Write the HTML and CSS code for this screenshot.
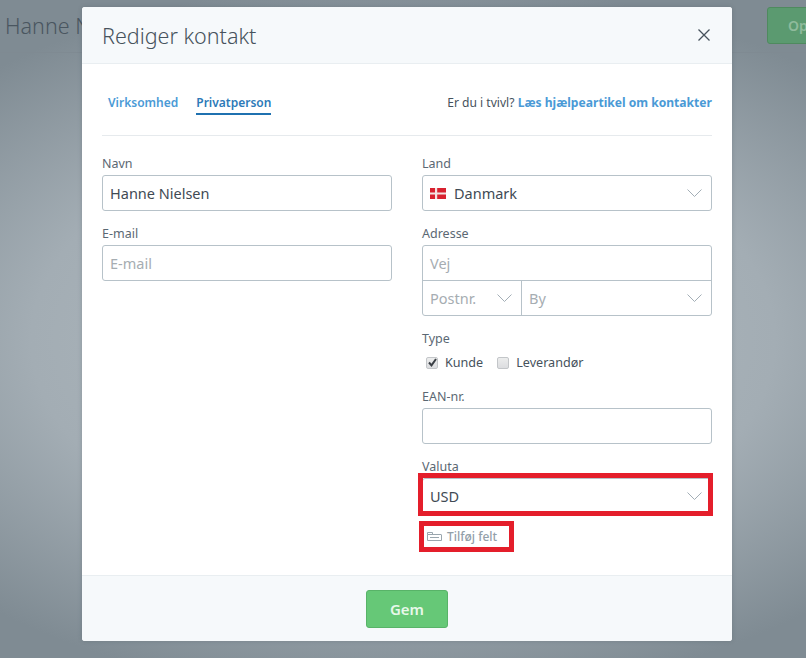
FILE: index.html
```html
<!DOCTYPE html>
<html lang="da">
<head>
<meta charset="utf-8">
<title>Rediger kontakt</title>
<link rel="stylesheet" href="styles.css">
</head>
<body>
<div class="page">
  <header class="page-head">
    <h1 class="page-title">Hanne N</h1>
    <button class="page-btn">Op</button>
  </header>
</div>
<div class="modal">
  <div class="modal-head">
    <h2 class="modal-title">Rediger kontakt</h2>
    <svg class="close" width="12" height="12" viewBox="0 0 12 12"><path d="M.5.5l11 11M11.500.5l-11 11" stroke="#46525c" stroke-width="1.300" fill="none"/></svg>
  </div>
  <div class="modal-body">
    <div class="tabs-row">
      <nav class="tabs">
        <a class="tab">Virksomhed</a>
        <a class="tab active">Privatperson</a>
      </nav>
      <p class="help">Er du i tvivl? <a class="help-link">Læs hjælpeartikel om kontakter</a></p>
    </div>
    <div class="form">
      <div class="col">
        <div class="field">
          <label class="label">Navn</label>
          <div class="input value">Hanne Nielsen</div>
        </div>
        <div class="field">
          <label class="label">E-mail</label>
          <div class="input placeholder">E-mail</div>
        </div>
      </div>
      <div class="col">
        <div class="field">
          <label class="label">Land</label>
          <div class="input value select">
            <svg class="flag" width="16" height="11" viewBox="0 0 16 11"><rect width="16" height="11" fill="#d8212f"/><path d="M5 0h2.200v11H5zM0 4.400h16v2.200H0z" fill="#f3e3e3"/></svg>
            <span class="grow">Danmark</span>
            <svg class="chev" width="15" height="8" viewBox="0 0 15 8"><path d="M.5.5l7 7 7-7" fill="none" stroke="#a3aeb6"/></svg>
          </div>
        </div>
        <div class="field">
          <label class="label">Adresse</label>
          <div class="address">
            <div class="addr-row placeholder">Vej</div>
            <div class="addr-split">
              <div class="addr-cell zip placeholder"><span class="grow">Postnr.</span><svg class="chev" width="15" height="8" viewBox="0 0 15 8"><path d="M.5.5l7 7 7-7" fill="none" stroke="#a3aeb6"/></svg></div>
              <div class="addr-cell city placeholder"><span class="grow">By</span><svg class="chev" width="15" height="8" viewBox="0 0 15 8"><path d="M.5.5l7 7 7-7" fill="none" stroke="#a3aeb6"/></svg></div>
            </div>
          </div>
        </div>
        <div class="field type-field">
          <label class="label">Type</label>
          <div class="checks">
            <span class="check"><span class="box"><svg width="9" height="9" viewBox="0 0 9 9"><path d="M1 4.500l2.500 2.800L8 1" fill="none" stroke="#3a3f45" stroke-width="2"/></svg></span>Kunde</span>
            <span class="check"><span class="box"></span>Leverandør</span>
          </div>
        </div>
        <div class="field">
          <label class="label">EAN-nr.</label>
          <div class="input"></div>
        </div>
        <div class="field">
          <label class="label">Valuta</label>
          <div class="marked">
            <div class="input value select"><span class="grow">USD</span><svg class="chev" width="15" height="8" viewBox="0 0 15 8"><path d="M.5.5l7 7 7-7" fill="none" stroke="#a3aeb6"/></svg></div>
            <span class="red-box red-select"></span>
          </div>
        </div>
        <div class="add-field">
          <svg width="15" height="9" viewBox="0 0 15 9"><path d="M.5 2.500h13.500a.5.5 0 0 1 .5.5v5.500H.5zM.5 2.500V.5h5v2M3 5.500h9" fill="none" stroke="#9aa6ae"/></svg>
          <span>Tilføj felt</span>
          <span class="red-box red-add"></span>
        </div>
      </div>
    </div>
  </div>
  <div class="modal-foot">
    <button class="save">Gem</button>
  </div>
</div>
</body>
</html>
```
FILE: styles.css
```css
* { box-sizing: border-box; }
html, body { height: 100%; }
body {
  margin: 0;
  overflow: hidden;
  font-family: "Noto Sans", sans-serif;
  background: radial-gradient(ellipse 620px 360px at 403px 340px, #b2bcc1 0%, #a3adb4 60%, #7f8b93 100%);
  color: #46525c;
}
.page-head {
  height: 53px;
  padding: 7px 0 0 5px;
  display: flex;
  justify-content: space-between;
  align-items: flex-start;
  border-bottom: 1px solid #7f8a92;
}
.page-title {
  margin: 0;
  font-size: 21.500px;
  font-weight: 300;
  line-height: 37px;
  white-space: nowrap;
  color: #4a5660;
}
.page-btn {
  width: 60px;
  height: 37px;
  margin-right: -21px;
  border: 1px solid #4f8a5f;
  border-radius: 3px;
  background: #5b9a70;
  color: #8fbb9c;
  font: 600 14px "Noto Sans", sans-serif;
  text-align: left;
  padding-left: 20px;
}
.modal {
  position: absolute;
  left: 82px;
  top: 7px;
  width: 650px;
  height: 634px;
  background: #fff;
  border-radius: 3px;
  box-shadow: 0 0 4px rgba(60, 70, 80, .25);
  display: flex;
  flex-direction: column;
  overflow: hidden;
}
.modal-head {
  height: 57px;
  flex: none;
  padding: 0 22px 0 20px;
  display: flex;
  align-items: center;
  justify-content: space-between;
  background: #f6f9fb;
  border-bottom: 1px solid #e9eef1;
}
.modal-title {
  margin: 0;
  font-size: 21.500px;
  font-weight: 300;
  color: #47535d;
}
.modal-body { flex: 1; padding: 0 20px; }
.tabs-row {
  height: 72px;
  display: flex;
  justify-content: space-between;
  align-items: flex-start;
  border-bottom: 1px solid #e6eaed;
  padding-top: 29px;
}
.tabs { display: flex; gap: 18px; padding-left: 6px; }
.tab {
  font-size: 12px;
  font-weight: 600;
  line-height: 19px;
  color: #4a9ad6;
  padding-bottom: 1px;
}
.tab.active { color: #2d7ab8; border-bottom: 2px solid #1f71b0; }
.help {
  margin: 0;
  font-size: 12.100px;
  line-height: 19px;
  color: #46525c;
}
.help-link { font-weight: 700; color: #4a9ad6; }
.form {
  display: grid;
  grid-template-columns: 290px 290px;
  column-gap: 30px;
  padding-top: 17px;
}
.field { margin-bottom: 12px; }
.label {
  display: block;
  font-size: 12.500px;
  line-height: 22px;
  color: #5b6873;
}
.input {
  height: 36px;
  border: 1px solid #b7c2c9;
  border-radius: 3px;
  padding: 0 7px;
  display: flex;
  align-items: center;
  font-size: 14.500px;
  background: #fff;
}
.value { color: #3f4a54; }
.placeholder { color: #a6adb2; }
.grow { flex: 1; }
.select { padding-right: 9px; }
.flag { margin-right: 8px; }
.address { border: 1px solid #b7c2c9; border-radius: 3px; height: 71px; font-size: 14.500px; }
.addr-row { height: 34px; padding: 0 7px; display: flex; align-items: center; }
.addr-split { height: 35px; display: flex; border-top: 1px solid #b7c2c9; }
.addr-cell { display: flex; align-items: center; padding: 0 9px 0 7px; }
.zip { width: 99px; border-right: 1px solid #b7c2c9; }
.city { flex: 1; padding-left: 7px; }
.type-field { margin-bottom: 14px; }
.checks { display: flex; gap: 14px; padding: 3px 0 0 4px; }
.check { display: flex; align-items: center; gap: 7px; font-size: 12.600px; line-height: 19px; color: #46525c; }
.box {
  width: 12px;
  height: 12px;
  border: 1px solid #c3c6c9;
  border-radius: 2px;
  background: linear-gradient(#eceded, #dcdde0);
  display: flex;
  align-items: center;
  justify-content: center;
}
.marked { position: relative; }
.red-box { position: absolute; border: 5px solid #e41e2b; pointer-events: none; }
.red-select { left: -4px; right: -1px; top: -5px; bottom: -2px; }
.add-field {
  position: relative;
  display: flex;
  align-items: center;
  gap: 5px;
  width: 92px;
  height: 31px;
  margin-top: -5px;
  padding-left: 5px;
  font-size: 12px;
  font-weight: 500;
  color: #93a0a9;
}
.red-add { left: -3px; right: 0; top: 0; bottom: 0; }
.modal-foot {
  height: 66px;
  flex: none;
  display: flex;
  justify-content: center;
  align-items: center;
  background: #f6f9fb;
  border-top: 1px solid #e9eef1;
}
.save {
  width: 82px;
  height: 38px;
  border: 1px solid #58b368;
  border-radius: 3px;
  background: #66c877;
  color: #e8f8ea;
  font: 600 15px "Noto Sans", sans-serif;
}
```
